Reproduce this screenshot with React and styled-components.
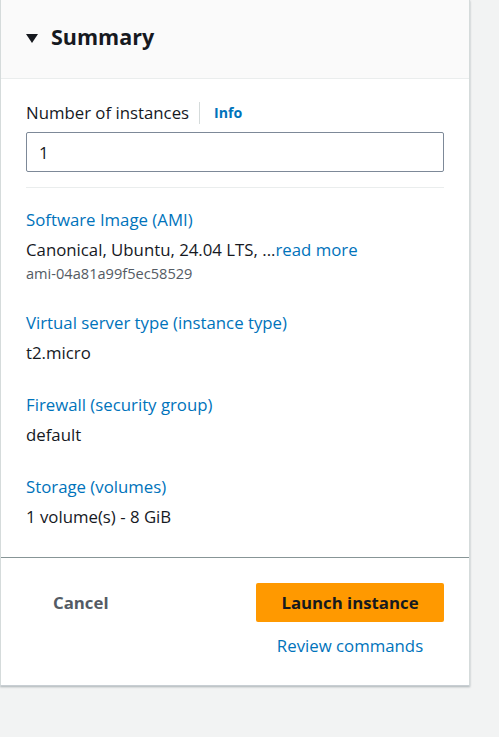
import React from "react";
import styled, { createGlobalStyle } from "styled-components";

const Global = createGlobalStyle`
  html, body { margin: 0; padding: 0; background: #f2f3f3; }
  body { font-family: "Open Sans", "Noto Sans", sans-serif; color: #16191f; }
  * { box-sizing: border-box; }
`;

const Page = styled.div`
  width: 499px;
  min-height: 737px;
  background: #f2f3f3;
`;

const Card = styled.section`
  width: 470px;
  background: #fff;
  border-left: 1px solid #d5dbdb;
  border-right: 1px solid #d5dbdb;
  border-bottom: 1px solid #c8ced3;
  box-shadow: 0 1px 2px rgba(0, 28, 36, 0.3);
`;

const Header = styled.header`
  height: 79px;
  background: #fafafa;
  border-bottom: 1px solid #eaeded;
  display: flex;
  align-items: center;
  gap: 13px;
  padding: 0 0 4px 25px;
`;

const Caret = styled.span`
  width: 0;
  height: 0;
  border-left: 6px solid transparent;
  border-right: 6px solid transparent;
  border-top: 9px solid #16191f;
  margin-top: 2px;
`;

const Title = styled.h2`
  margin: 0;
  font-size: 21.5px;
  font-weight: 700;
  line-height: 28px;
  color: #16191f;
`;

const Body = styled.div`
  padding: 22px 25px 28px 25px;
  border-bottom: 1px solid #879596;
`;

const LabelRow = styled.div`
  display: flex;
  align-items: center;
  height: 24px;
  font-size: 16.8px;
  line-height: 24px;
`;

const InfoLink = styled.a`
  margin-left: 10px;
  padding-left: 14px;
  border-left: 1px solid #d5dbdb;
  font-size: 14.2px;
  font-weight: 700;
  color: #0073bb;
  line-height: 22px;
  text-decoration: none;
`;

const Input = styled.input`
  display: block;
  margin-top: 7px;
  width: 418px;
  height: 40px;
  border: 1px solid #7d8998;
  border-radius: 2px;
  padding: 0 12px;
  font-family: inherit;
  font-size: 16.8px;
  color: #16191f;
  background: #fff;
  outline: none;
`;

const Divider = styled.hr`
  margin: 15px 0 20px;
  width: 418px;
  border: none;
  border-top: 1px solid #eaeded;
`;

const Items = styled.dl`
  margin: 0;
  display: flex;
  flex-direction: column;
  gap: 28px;
`;

const Item = styled.div`
  display: flex;
  flex-direction: column;
`;

const ItemTitle = styled.dt`
  font-size: 16.8px;
  line-height: 24px;
  color: #0073bb;
  margin-bottom: 6px;
`;

const ItemValue = styled.dd`
  margin: 0;
  font-size: 16.8px;
  line-height: 24px;
  color: #16191f;
`;

const Sub = styled.div`
  margin-top: 1px;
  font-size: 14.6px;
  line-height: 20px;
  color: #545b64;
`;

const Link = styled.a`
  color: #0073bb;
  text-decoration: none;
`;

const Footer = styled.footer`
  display: grid;
  grid-template-columns: 1fr 188px;
  column-gap: 20px;
  padding: 25px 25px 27px 25px;
  align-items: start;
`;

const CancelButton = styled.button`
  justify-self: start;
  height: 39px;
  padding: 0 27px;
  border: none;
  background: transparent;
  font-family: inherit;
  font-size: 16.8px;
  font-weight: 700;
  color: #545b64;
`;

const Actions = styled.div`
  display: flex;
  flex-direction: column;
  align-items: center;
  gap: 12px;
`;

const LaunchButton = styled.button`
  width: 188px;
  height: 39px;
  border: none;
  border-radius: 2px;
  background: #ff9900;
  font-family: inherit;
  font-size: 16.8px;
  font-weight: 700;
  color: #16191f;
`;

const ReviewLink = styled.a`
  font-size: 16.8px;
  line-height: 24px;
  color: #0073bb;
  text-decoration: none;
`;

const items = [
  {
    title: "Software Image (AMI)",
    value: (
      <>
        Canonical, Ubuntu, 24.04 LTS, ...<Link href="#">read more</Link>
      </>
    ),
    sub: "ami-04a81a99f5ec58529",
  },
  { title: "Virtual server type (instance type)", value: "t2.micro" },
  { title: "Firewall (security group)", value: "default" },
  { title: "Storage (volumes)", value: "1 volume(s) - 8 GiB" },
];

export default function App() {
  return (
    <Page>
      <Global />
      <Card>
        <Header>
          <Caret />
          <Title>Summary</Title>
        </Header>
        <Body>
          <LabelRow>
            Number of instances
            <InfoLink href="#">Info</InfoLink>
          </LabelRow>
          <Input defaultValue="1" />
          <Divider />
          <Items>
            {items.map((it) => (
              <Item key={it.title}>
                <ItemTitle>{it.title}</ItemTitle>
                <ItemValue>{it.value}</ItemValue>
                {it.sub && <Sub>{it.sub}</Sub>}
              </Item>
            ))}
          </Items>
        </Body>
        <Footer>
          <CancelButton>Cancel</CancelButton>
          <Actions>
            <LaunchButton>Launch instance</LaunchButton>
            <ReviewLink href="#">Review commands</ReviewLink>
          </Actions>
        </Footer>
      </Card>
    </Page>
  );
}
